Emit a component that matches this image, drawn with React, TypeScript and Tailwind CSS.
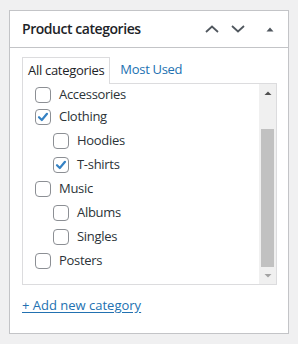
import React from "react";

type Item = { label: string; checked?: boolean; children?: Item[] };

const items: Item[] = [
  { label: "Accessories" },
  { label: "Clothing", checked: true, children: [{ label: "Hoodies" }, { label: "T-shirts", checked: true }] },
  { label: "Music", children: [{ label: "Albums" }, { label: "Singles" }] },
  { label: "Posters" },
];

function Box({ checked }: { checked?: boolean }) {
  return (
    <span className="w-4 h-4 rounded-[4px] border border-[#8c8f94] bg-white flex items-center justify-center shrink-0">
      {checked && (
        <svg width="14" height="14" viewBox="0 0 14 14">
          <path d="M3 7.2 L5.8 10 L11 3.8" fill="none" stroke="#3582c4" strokeWidth="2.2" strokeLinejoin="round" strokeLinecap="round" />
        </svg>
      )}
    </span>
  );
}

function Row({ item }: { item: Item }) {
  return (
    <div className="h-6 flex items-center gap-[8px]">
      <Box checked={item.checked} />
      <span>{item.label}</span>
    </div>
  );
}

export default function App() {
  return (
    <div className="w-[298px] h-[344px] bg-[#f0f0f1] pt-[10px] pl-[9px] text-[#2c3338]" style={{ fontFamily: '"Open Sans", "Noto Sans", sans-serif' }}>
      <div className="w-[280px] h-[324px] bg-white border border-[#c3c4c7] flex flex-col">
        <div className="h-[37px] border-b border-[#c3c4c7] flex items-center pl-[12px] pr-[12px] shrink-0">
          <div className="text-[14px] font-semibold text-[#1d2327] tracking-[-0.45px] flex-1 leading-none">Product categories</div>
          <div className="flex items-center">
            <svg width="14" height="8" viewBox="0 0 14 8" className="mr-[12px]">
              <path d="M1 7 L7 1.5 L13 7" fill="none" stroke="#50575e" strokeWidth="1.8" />
            </svg>
            <svg width="14" height="8" viewBox="0 0 14 8" className="mr-[21px]">
              <path d="M1 1 L7 6.5 L13 1" fill="none" stroke="#50575e" strokeWidth="1.8" />
            </svg>
            <svg width="8" height="5" viewBox="0 0 8 5" className="mr-[2px]">
              <path d="M0.5 4.5 L4 0.5 L7.5 4.5 Z" fill="#50575e" />
            </svg>
          </div>
        </div>
        <div className="pl-[12px] pr-[11px] pt-[9px]">
          <div className="flex items-end text-[13px]">
            <div className="h-[27px] border border-b-0 border-[#dcdcde] bg-white px-[5px] pt-[3px] leading-[18px] text-[#1d2327] relative z-10 -mb-px tracking-[-0.3px]">
              All categories
            </div>
            <div className="h-[26px] px-[10px] pt-[3px] leading-[18px] text-[#2271b1] tracking-[-0.3px]">Most Used</div>
          </div>
          <div className="h-[202px] border border-[#dcdcde] flex text-[13px] tracking-[-0.3px]">
            <div className="flex-1 overflow-hidden pl-[12px] -mt-px">
              {items.map((it) => (
                <div key={it.label} className={it.label === "Clothing" ? "-mt-[2px]" : ""}>
                  <Row item={it} />
                  {it.children && (
                    <div className="pl-[18px]">
                      {it.children.map((c) => (
                        <Row key={c.label} item={c} />
                      ))}
                    </div>
                  )}
                </div>
              ))}
            </div>
            <div className="w-[17px] bg-[#f0f0f0] flex flex-col">
              <div className="h-[17px] flex items-center justify-center">
                <svg width="8" height="4" viewBox="0 0 8 4"><path d="M0.5 4 L4 0.5 L7.5 4 Z" fill="#505050" /></svg>
              </div>
              <div className="flex-1 flex flex-col justify-end px-[2px]">
                <div className="h-[138px] bg-[#c1c1c1]" />
              </div>
              <div className="h-[17px] flex items-center justify-center">
                <svg width="8" height="4" viewBox="0 0 8 4"><path d="M0.5 0 L4 3.5 L7.5 0 Z" fill="#a3a3a3" /></svg>
              </div>
            </div>
          </div>
          <div className="mt-[11px] text-[13px] text-[#2271b1] underline underline-offset-[2px] leading-[18px]">
            + Add new category
          </div>
        </div>
      </div>
    </div>
  );
}
